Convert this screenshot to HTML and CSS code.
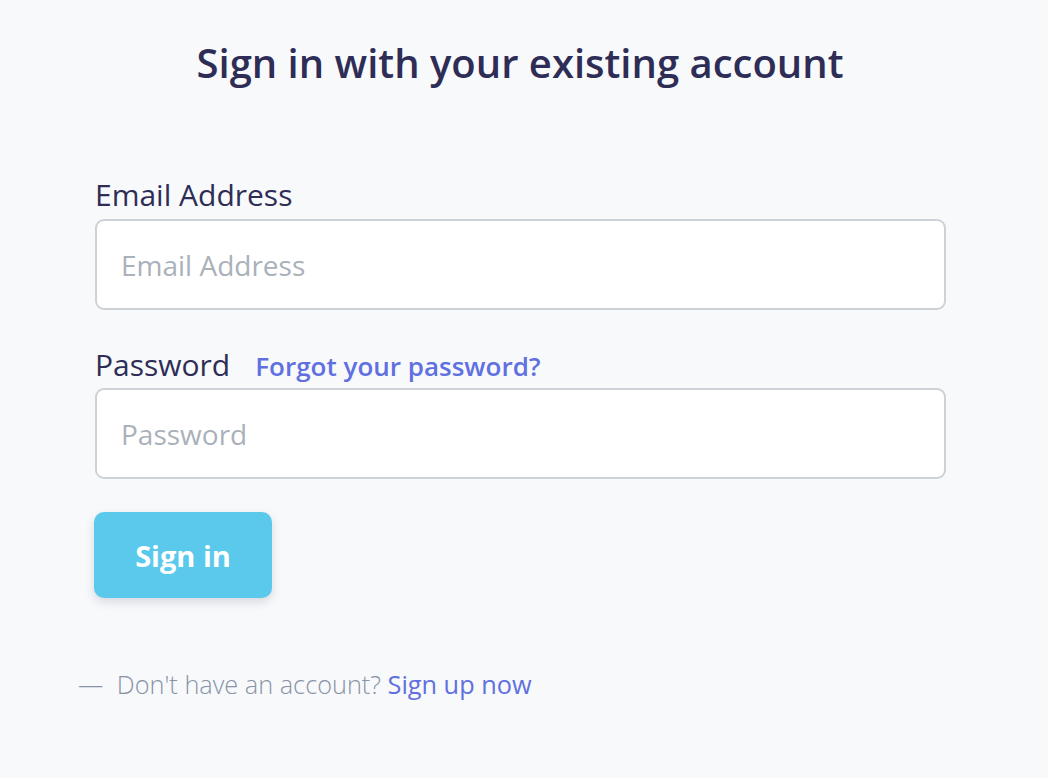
FILE: index.html
```html
<!DOCTYPE html>
<html lang="en">
<head>
<meta charset="utf-8">
<title>Sign in</title>
<link rel="stylesheet" href="styles.css">
</head>
<body>
<main class="page">
  <h1 class="title">Sign in with your existing account</h1>
  <form class="form">
    <div class="field">
      <div class="label-row"><label class="label" for="email">Email Address</label></div>
      <input class="input" id="email" type="email" placeholder="Email Address">
    </div>
    <div class="field">
      <div class="label-row">
        <label class="label" for="password">Password</label>
        <a class="forgot" href="#">Forgot your password?</a>
      </div>
      <input class="input" id="password" type="password" placeholder="Password">
    </div>
    <button class="btn" type="button">Sign in</button>
  </form>
  <p class="footer"><span class="dash">—</span> Don't have an account? <a class="signup" href="#">Sign up now</a></p>
</main>
</body>
</html>
```

FILE: styles.css
```css
html, body {
  margin: 0;
  padding: 0;
  background: #f8f9fb;
}
body {
  font-family: "Open Sans", "Noto Sans", sans-serif;
  color: #2e2d56;
}
.page {
  padding: 36px 0 0 0;
}
.title {
  margin: 0;
  text-align: center;
  font-size: 40px;
  font-weight: 600;
  color: #2e2d56;
  line-height: 54px;
  padding-right: 8px;
}
.form {
  margin: 78px 0 0 95px;
  width: 851px;
  display: flex;
  flex-direction: column;
}
.field {
  display: flex;
  flex-direction: column;
  margin-bottom: 27px;
}
.field + .field {
  margin-bottom: 33px;
}
.label-row {
  display: flex;
  align-items: baseline;
  gap: 25px;
  height: 48px;
  padding-top: 3px;
}
.field + .field .label-row {
  padding-top: 4px;
  height: 47px;
}
.label {
  font-size: 30px;
  line-height: 48px;
  font-weight: 400;
  color: #2e2d56;
}
.forgot {
  font-size: 26px;
  font-weight: 600;
  color: #6070e0;
  text-decoration: none;
}
.input {
  box-sizing: border-box;
  width: 100%;
  height: 91px;
  border: 2px solid #cdd1d8;
  border-radius: 9px;
  background: #fff;
  padding: 0 24px;
  font-family: "Open Sans", "Noto Sans", sans-serif;
  font-size: 28px;
  color: #2e2d56;
  outline: none;
}
.input::placeholder {
  color: #aab1ba;
}
.btn {
  align-self: flex-start;
  width: 178px;
  height: 86px;
  margin-left: -1px;
  border: none;
  border-radius: 10px;
  background: #5bc9ec;
  color: #fff;
  font-family: "Open Sans", "Noto Sans", sans-serif;
  font-size: 29px;
  font-weight: 700;
  box-shadow: 0 4px 10px rgba(60, 70, 100, 0.18);
  cursor: pointer;
}
.footer {
  margin: 66px 0 0 78px;
  font-size: 25.3px;
  font-weight: 300;
  color: #8794a6;
  line-height: 40px;
}
.dash {
  margin-right: 7px;
}
.signup {
  color: #6070e0;
  text-decoration: none;
  font-weight: 400;
}
```
